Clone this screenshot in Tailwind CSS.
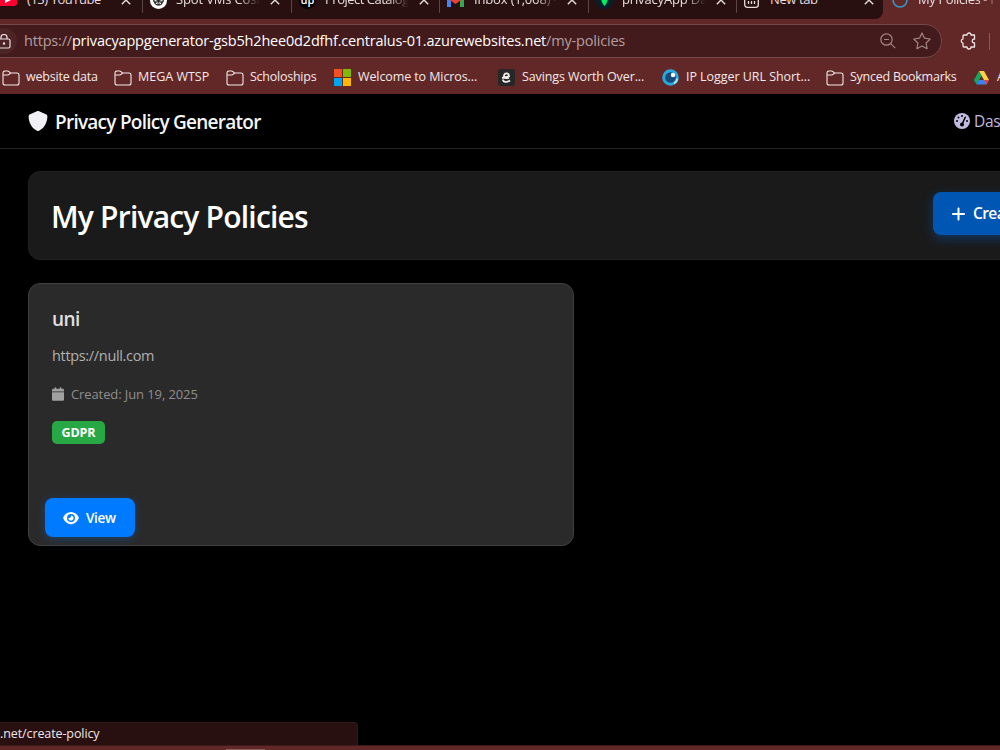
<!DOCTYPE html>
<html lang="en">
<head>
    <meta charset="UTF-8">
    <title>My Policies - Privacy Policy Generator</title>
    <script src="https://cdn.jsdelivr.net/npm/@tailwindcss/browser@4"></script>
</head>
<body class="h-[750px] w-[1000px] overflow-hidden bg-black font-['Open_Sans',sans-serif]">
    <svg class="hidden">
        <symbol id="folder" viewBox="0 0 18 16"><path d="M1 4.200V3a2 2 0 0 1 2-2h2.600c.6 0 1 .2 1.400.6L8.600 3H15a2 2 0 0 1 2 2v8a2 2 0 0 1-2 2H3a2 2 0 0 1-2-2zM1 5h4.700c.6 0 1-.2 1.400-.6L8.600 3" fill="none" stroke="currentColor" stroke-width="1.100"/></symbol>
        <symbol id="close" viewBox="0 0 10 10"><path d="M.8.8l8.400 8.400M9.200.8L.8 9.200" stroke="currentColor" stroke-width="1.400"/></symbol>
    </svg>

    <div class="flex h-full w-full flex-col overflow-hidden">
        <!-- Browser tabs -->
        <div class="h-[19px] shrink-0 overflow-hidden bg-[#622828]">
            <div class="-mt-[13px] flex h-8 text-[13px] whitespace-nowrap text-[#e6dcdc]">
                <div class="flex w-[883px] shrink-0 rounded-br-lg bg-[#281011]">
                    <div class="-ml-[6px] flex h-[26px] w-[149px] shrink-0 items-center border-r border-[#5c4546] pl-[6px]">
                        <svg class="w-[17px] shrink-0" viewBox="0 0 17 12"><rect x="-4" width="21" height="12" rx="3" fill="#ff0033"/><path d="M5 3l6 3-6 3z" fill="#fff"/></svg>
                        <span class="ml-[10px] w-[78px] tracking-[-0.45px]">(13) YouTube</span>
                        <svg class="ml-[16px] size-[10px] shrink-0"><use href="#close"/></svg>
                    </div>
                    <div class="flex h-[26px] w-[149px] shrink-0 items-center border-r border-[#5c4546] pl-[7px]">
                        <svg class="size-[17px] shrink-0" viewBox="0 0 18 18"><circle cx="9" cy="9" r="9" fill="#fff"/><g fill="none" stroke="#222" stroke-width=".9"><ellipse cx="9" cy="6.500" rx="4" ry="2.200"/><ellipse cx="9" cy="6.500" rx="4" ry="2.200" transform="rotate(60 9 9)"/><ellipse cx="9" cy="6.500" rx="4" ry="2.200" transform="rotate(120 9 9)"/><ellipse cx="9" cy="6.500" rx="4" ry="2.200" transform="rotate(180 9 9)"/><ellipse cx="9" cy="6.500" rx="4" ry="2.200" transform="rotate(240 9 9)"/><ellipse cx="9" cy="6.500" rx="4" ry="2.200" transform="rotate(300 9 9)"/></g></svg>
                        <span class="ml-[9px] w-[84px] mask-r-from-75% tracking-[-0.15px]">Spot VMs Cost</span>
                        <svg class="ml-[10px] size-[10px] shrink-0"><use href="#close"/></svg>
                    </div>
                    <div class="flex h-[26px] w-[148px] shrink-0 items-center border-r border-[#5c4546] pl-[7px]">
                        <div class="flex size-[17px] shrink-0 items-center justify-center rounded-full bg-black text-[11px] font-semibold text-white">up</div>
                        <span class="ml-[9px] w-[84px] mask-r-from-75% tracking-[-0.5px]">Project Catalog</span>
                        <svg class="ml-[10px] size-[10px] shrink-0"><use href="#close"/></svg>
                    </div>
                    <div class="flex h-[26px] w-[149px] shrink-0 items-center border-r border-[#5c4546] pl-[7px]">
                        <svg class="h-[13px] w-[17px] shrink-0" viewBox="0 0 17 13"><path d="M0 1h4v12H0z" fill="#4285f4"/><path d="M13 1h4v12h-4z" fill="#34a853"/><path d="M0 1l2-1 6.500 5L15 0l2 1v3L8.500 10 0 4z" fill="#ea4335"/></svg>
                        <span class="ml-[10px] w-[83px] mask-r-from-75% tracking-[-0.15px]">Inbox (1,068) -</span>
                        <svg class="ml-[10px] size-[10px] shrink-0"><use href="#close"/></svg>
                    </div>
                    <div class="flex h-[26px] w-[148px] shrink-0 items-center border-r border-[#5c4546] pl-[7px]">
                        <svg class="size-[17px] shrink-0" viewBox="0 0 17 17"><circle cx="8.500" cy="8.500" r="8.500" fill="#05202b"/><path d="M8.500 1c4.500 4 4 8.500 0 13-4-4.500-4.500-9 0-13z" fill="#00ed64"/></svg>
                        <span class="ml-[9px] w-[84px] mask-r-from-75% tracking-[-0.15px]">privacyApp Da</span>
                        <svg class="ml-[10px] size-[10px] shrink-0"><use href="#close"/></svg>
                    </div>
                    <div class="flex h-[26px] w-[146px] shrink-0 items-center pl-[7px]">
                        <svg class="size-[15px] shrink-0" viewBox="0 0 15 15" fill="none" stroke="#e6dcdc" stroke-width="1.300"><rect x=".7" y=".7" width="13.600" height="13.600" rx="2.500"/><path d="M1 4.500h13M4.500 8v3M7.500 8v3M10.500 8v3"/></svg>
                        <span class="ml-[11px] w-[84px] tracking-[-0.4px]">New tab</span>
                        <svg class="ml-[10px] size-[10px] shrink-0"><use href="#close"/></svg>
                    </div>
                </div>
                <div class="flex h-[26px] shrink-0 items-center pl-[9px]">
                    <svg class="size-[16px] shrink-0" viewBox="0 0 16 16"><circle cx="8" cy="8" r="7" fill="none" stroke="#3399cc" stroke-width="1.500"/></svg>
                    <span class="ml-[10px] w-[84px] mask-r-from-70% tracking-[-0.4px]">My Policies - P</span>
                </div>
            </div>
        </div>

        <!-- Address bar -->
        <div class="flex h-[42px] shrink-0 items-center bg-[#622828] pt-[2px]">
            <div class="-ml-4 flex h-[34px] w-[958px] shrink-0 items-center rounded-full border border-[#764848] bg-[#441b1c] pl-[6px]">
                <div class="flex size-[26px] shrink-0 items-center justify-center rounded-full bg-[#4c2425]">
                    <svg class="h-[15px] w-[14px]" viewBox="0 0 14 15" fill="none" stroke="#ece2e2" stroke-width="1.200"><rect x="1" y="5" width="12" height="9" rx="1.500"/><path d="M4 5V3.500a3 3 0 0 1 6 0V5"/><circle cx="7" cy="9.500" r=".6" fill="#ece2e2"/></svg>
                </div>
                <div class="ml-[7px] w-[602px] text-[14.500px] whitespace-nowrap text-[#b39e9f] tracking-[-0.19px]">https://<span class="text-white">privacyappgenerator-gsb5h2hee0d2dfhf.centralus-01.azurewebsites.net</span>/my-policies</div>
                <svg class="ml-[254px] size-[16px] shrink-0" viewBox="0 0 16 16" fill="none" stroke="#a08485" stroke-width="1.200"><circle cx="6.500" cy="6.500" r="5.700"/><path d="M10.700 10.700l4.500 4.500M4 6.500h5"/></svg>
                <svg class="ml-[17px] size-[18px] shrink-0" viewBox="0 0 18 18" fill="none" stroke="#a08485" stroke-width="1.200" stroke-linejoin="round"><path d="M9 1l2.500 5.200 5.700.8-4.100 4 1 5.700L9 14l-5.100 2.700 1-5.700-4.100-4 5.700-.8z"/></svg>
            </div>
            <svg class="ml-[18px] h-[18px] w-[17px] shrink-0" viewBox="0 0 17 18" fill="none" stroke="#f0e6e6" stroke-width="1.300" stroke-linejoin="round"><path d="M5 3h2a2 2 0 0 1 4 0h3.500v4.200h-.8a1.900 1.900 0 0 0 0 3.700h.8V15H11a2 2 0 0 1-4 0H4a1 1 0 0 1-1-1v-2.800a2.200 2.200 0 0 1 0-4.300V4a1 1 0 0 1 1-1z"/></svg>
            <div class="ml-[12px] h-[17px] w-px shrink-0 bg-[#875c5c]"></div>
        </div>

        <!-- Bookmarks -->
        <div class="flex h-[33px] shrink-0 items-center bg-[#622828] pl-[2px] text-[12.500px] whitespace-nowrap text-[#f3e9e9]">
            <svg class="h-[16px] w-[18px] shrink-0"><use href="#folder"/></svg>
            <span class="ml-[6px] w-[88px] shrink-0 tracking-[-0.2px]">website data</span>
            <svg class="h-[16px] w-[18px] shrink-0"><use href="#folder"/></svg>
            <span class="ml-[6px] w-[88px] shrink-0">MEGA WTSP</span>
            <svg class="h-[16px] w-[18px] shrink-0"><use href="#folder"/></svg>
            <span class="ml-[6px] w-[84px] shrink-0 tracking-[-0.25px]">Scholoships</span>
            <svg class="size-[17px] shrink-0" viewBox="0 0 17 17"><path d="M0 0h8v8H0z" fill="#f25022"/><path d="M9 0h8v8H9z" fill="#7fba00"/><path d="M0 9h8v8H0z" fill="#00a4ef"/><path d="M9 9h8v8H9z" fill="#ffb900"/></svg>
            <span class="ml-[7px] w-[140px] shrink-0 tracking-[-0.1px]">Welcome to Micros...</span>
            <div class="flex size-[17px] shrink-0 items-center justify-center rounded-[3px] bg-[#272727]">
                <svg class="size-[11px]" viewBox="0 0 11 11" fill="none" stroke="#eee" stroke-width="1.800"><path d="M1 5.800l7-1.500C8 .5 3 .5 3 4c0 2.500 3 2.500 5 1.800M2 7.500c0 3 4 3 7 1"/></svg>
            </div>
            <span class="ml-[7px] w-[140px] shrink-0 tracking-[-0.1px]">Savings Worth Over...</span>
            <svg class="size-[17px] shrink-0" viewBox="0 0 17 17"><circle cx="8.500" cy="8.500" r="6.800" fill="#174a78" stroke="#28a9dc" stroke-width="3"/><circle cx="11" cy="6" r="2.200" fill="#fff"/><path d="M12 14.500a7 7 0 0 0 3.300-5" fill="none" stroke="#a6e4f4" stroke-width="2"/></svg>
            <span class="ml-[7px] w-[140px] shrink-0 tracking-[-0.05px]">IP Logger URL Short...</span>
            <svg class="h-[16px] w-[18px] shrink-0"><use href="#folder"/></svg>
            <span class="ml-[6px] w-[124px] shrink-0 tracking-[-0.25px]">Synced Bookmarks</span>
            <svg class="h-[14px] w-[15px] shrink-0" viewBox="0 0 15 14"><path d="M5 0L0 9l2.500 4.500L7.500 4.700z" fill="#11a861"/><path d="M5 0h5l5 9h-5z" fill="#ffcf48"/><path d="M2.500 13.500L5 9h10l-2.500 4.500z" fill="#3b82f6"/><path d="M10 9h5l-2.500 4.500z" fill="#ea4335"/></svg>
            <span class="ml-[8px]">A</span>
        </div>

        <!-- Site navbar -->
        <nav class="flex h-[55px] shrink-0 items-center border-b border-[#242424] pl-7 whitespace-nowrap">
            <svg class="size-5 shrink-0 fill-[#f0f0f5]" viewBox="0 0 512 512"><path d="M256 0c4.600 0 9.200 1 13.400 2.900L457.700 82.800c22 9.300 38.400 31 38.300 57.200c-.5 99.200-41.300 280.700-213.600 363.200c-16.700 8-36.100 8-52.800 0C57.300 420.700 16.500 239.200 16 140c-.1-26.200 16.300-47.900 38.300-57.200L242.700 2.900C246.800 1 251.400 0 256 0z"/></svg>
            <span class="ml-[7px] w-[899px] shrink-0 pt-[2px] text-[19px] font-semibold tracking-[-0.75px] text-[#f5f5f5]">Privacy Policy Generator</span>
            <svg class="size-4 shrink-0" viewBox="0 0 512 512"><circle cx="256" cy="256" r="256" fill="#c0bbdf"/><g fill="#000"><circle cx="256" cy="96" r="32"/><circle cx="144" cy="144" r="32"/><circle cx="96" cy="256" r="32"/><circle cx="416" cy="256" r="32"/><circle cx="256" cy="368" r="64"/></g><path d="M256 368l104-234" stroke="#000" stroke-width="48" stroke-linecap="round"/></svg>
            <span class="ml-[4px] shrink-0 pt-[2px] text-[15.500px] font-medium tracking-[-0.3px] text-[#c0bbdf]">Dashboard</span>
        </nav>

        <main class="flex grow flex-col pt-[22px] pl-7">
            <div class="flex h-[89px] w-[1130px] shrink-0 items-center rounded-xl border border-[#202020] bg-[#1a1a1a] pl-[22px]">
                <h1 class="w-[882px] shrink-0 pt-[2px] text-[30px] font-semibold tracking-[-0.8px] whitespace-nowrap text-white">My Privacy Policies</h1>
                <a href="#" class="-mt-1 flex h-[43px] w-[180px] shrink-0 items-center rounded-lg bg-[#0056b3] pl-[18px] text-[15.500px] font-semibold text-white shadow-[0_4px_12px_rgba(0,123,255,0.3)]">
                    <svg class="h-4 w-[15px] shrink-0 fill-white" viewBox="0 0 448 512"><path d="M256 80c0-17.700-14.300-32-32-32s-32 14.300-32 32V224H48c-17.700 0-32 14.300-32 32s14.300 32 32 32H192V432c0 17.700 14.300 32 32 32s32-14.300 32-32V288H400c17.700 0 32-14.300 32-32s-14.300-32-32-32H256V80z"/></svg>
                    <span class="ml-[7px] pt-px tracking-[-0.6px]">Create New</span>
                </a>
            </div>

            <div class="mt-[23px] flex h-[263px] w-[546px] shrink-0 flex-col items-start rounded-xl border border-[#404040] bg-[#2a2a2a] px-[23px]">
                <h2 class="mt-[21px] text-[19px] leading-7 font-semibold tracking-[-0.6px] text-[#e0e0e0]">uni</h2>
                <p class="mt-[11px] text-[14.500px] leading-6 tracking-[-0.33px] text-[#b0b0b0]">https://null.com</p>
                <div class="mt-[16px] flex items-center text-[13px] leading-5 text-[#8e8e8e]">
                    <svg class="mr-[7px] h-[14px] w-[12px] fill-[#a0a0a0]" viewBox="0 0 448 512"><path d="M96 32V64H48C21.500 64 0 85.500 0 112v48H448V112c0-26.500-21.500-48-48-48H352V32c0-17.700-14.300-32-32-32s-32 14.300-32 32V64H160V32c0-17.700-14.300-32-32-32S96 14.300 96 32zM448 192H0V464c0 26.500 21.500 48 48 48H400c26.500 0 48-21.500 48-48V192z"/></svg>
                    <span class="tracking-[-0.1px]">Created: Jun 19, 2025</span>
                </div>
                <span class="mt-[17px] flex h-[23px] w-[53px] items-center justify-center rounded-[5px] bg-[#28a745] pt-px text-[12.500px] font-bold tracking-[-0.1px] text-white">GDPR</span>
                <a href="#" class="mt-[54px] -ml-[7px] flex h-[39px] w-[90px] items-center rounded-lg bg-[#007bff] pl-[18px] text-[13.500px] font-semibold text-white shadow-[0_2px_8px_rgba(0,123,255,0.3)]">
                    <svg class="h-[14px] w-4 fill-white" viewBox="0 0 576 512"><path d="M288 32c-80.800 0-145.500 36.800-192.600 80.600C48.600 156 17.300 208 2.500 243.700c-3.300 7.900-3.300 16.700 0 24.600C17.300 304 48.600 356 95.400 399.400C142.500 443.200 207.200 480 288 480s145.500-36.800 192.600-80.600c46.800-43.500 78.100-95.400 93-131.100c3.300-7.900 3.300-16.700 0-24.600c-14.900-35.700-46.200-87.700-93-131.100C433.500 68.800 368.800 32 288 32zM144 256a144 144 0 1 1 288 0 144 144 0 1 1 -288 0zm144-64c0 35.300-28.700 64-64 64c-7.100 0-13.900-1.200-20.300-3.300c-5.500-1.800-11.900 1.600-11.700 7.400c.3 6.900 1.300 13.800 3.200 20.700c13.700 51.200 66.400 81.600 117.600 67.900s81.600-66.400 67.900-117.600c-11.100-41.500-47.800-69.400-88.600-71.100c-5.800-.2-9.200 6.100-7.400 11.700c2.100 6.400 3.300 13.200 3.300 20.300z"/></svg>
                    <span class="ml-[7px] pt-px tracking-[-0.35px]">View</span>
                </a>
            </div>
        </main>

        <!-- Link preview and window edge -->
        <div class="flex h-[23px] w-[358px] shrink-0 items-center rounded-tr-[4px] border-t border-r border-[#301819] bg-[#281011] pt-px text-[12.500px] tracking-[-0.1px] text-[#f0e6e6]">.net/create-policy</div>
        <div class="flex h-[5px] shrink-0 items-end border-t border-[#401a1a] bg-[#622828]">
            <div class="ml-[226px] h-px w-[39px] bg-[#8a6060]"></div>
        </div>
    </div>
</body>
</html>
